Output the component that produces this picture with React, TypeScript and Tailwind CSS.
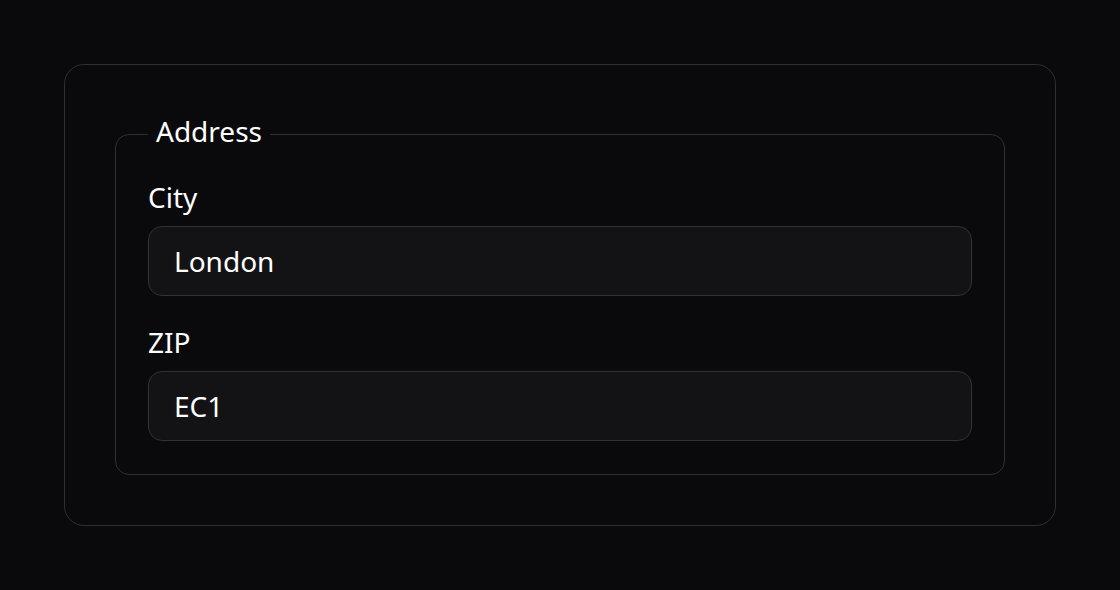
const fields = [
  { label: "City", value: "London" },
  { label: "ZIP", value: "EC1" },
];

export default function App() {
  return (
    <div className="min-h-[590px] bg-[#0a0a0c] pt-16 px-16 font-['Noto_Sans',sans-serif] text-white">
      <div className="rounded-[20px] border border-[#2f2f33] p-[50px]">
        <fieldset className="rounded-[14px] border border-[#2f2f33] px-8 pt-[25px] pb-[33px]">
          <legend className="px-2 pb-[6px] text-[28px] leading-[32px]">Address</legend>
          <div className="flex flex-col gap-[27px]">
            {fields.map((f) => (
              <label key={f.label} className="flex flex-col gap-[10px]">
                <span className="text-[28px] leading-[38px]">{f.label}</span>
                <input
                  defaultValue={f.value}
                  className="h-[70px] rounded-[14px] border border-[#323237] bg-[#131316] px-[25px] text-[28px] leading-[38px] text-white outline-none"
                />
              </label>
            ))}
          </div>
        </fieldset>
      </div>
    </div>
  );
}
